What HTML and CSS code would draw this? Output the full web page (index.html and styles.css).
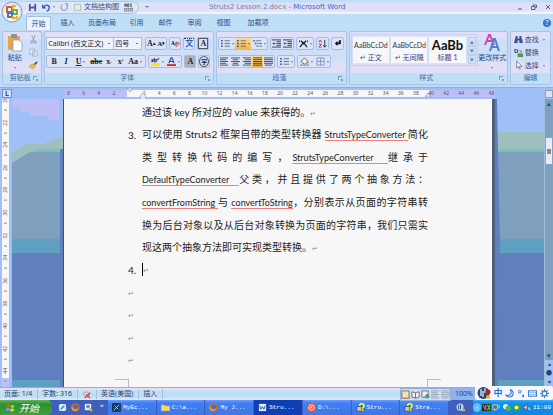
FILE: index.html
```html
<!DOCTYPE html>
<html lang="zh-cn">
<head>
    <meta charset="UTF-8">
    <title>Struts2 Lesson 2.docx - Microsoft Word</title>
    <link rel="stylesheet" href="styles.css">
</head>
<body>
    <!-- 公用图标 -->
    <svg class="defs" aria-hidden="true">
        <symbol id="i-lines" viewBox="0 0 10 10"><path d="M0 1h9M0 3h7M0 5h9M0 7h7M0 9h9" stroke="#445" fill="none"/></symbol>
        <symbol id="i-center" viewBox="0 0 10 10"><path d="M0 1h10M2 3h6M0 5h10M2 7h6M1 9h8" stroke="#445" fill="none"/></symbol>
        <symbol id="i-right" viewBox="0 0 10 10"><path d="M1 1h9M3 3h7M1 5h9M3 7h7M1 9h9" stroke="#445" fill="none"/></symbol>
        <symbol id="i-full" viewBox="0 0 10 10"><path d="M0 1h10M0 3h10M0 5h10M0 7h10M0 9h10" stroke="#543a10" fill="none"/></symbol>
        <symbol id="i-spread" viewBox="0 0 10 10"><path d="M0 1h10M0 3h10M0 5h10M0 7h10M1 9h8" stroke="#445" fill="none"/></symbol>
        <symbol id="i-list" viewBox="0 0 10 10"><path d="M0 2h2M0 5h2M0 8h2" stroke="#3b62b5" stroke-width="1.6"/><path d="M4 2h6M4 5h6M4 8h6" stroke="#667" fill="none"/></symbol>
        <symbol id="i-indent" viewBox="0 0 10 10"><path d="M0 1h10M5 3h5M5 5h5M5 7h5M0 9h10" stroke="#334" fill="none"/><path d="M4 5H1M2.5 3.5L1 5l1.500 1.500" stroke="#2956b8" fill="none"/></symbol>
        <symbol id="i-ff" viewBox="0 0 10 10"><circle cx="5" cy="5" r="4.500" fill="#e36a12"/><circle cx="5.300" cy="4.300" r="2.600" fill="#3a6fc8"/><path d="M1 2c0 5 3 6 7 4-1 3-6 4-7.500 0z" fill="#f8a01c"/></symbol>
        <symbol id="i-help" viewBox="0 0 10 10"><rect x="1" y="4" width="5" height="5" fill="#c8c8b0" stroke="#333" stroke-width=".6"/><path d="M4 3c0-3 5-3 5 0 0 2-2 1.500-2 3.500" fill="none" stroke="#ff0" stroke-width="1.800"/><path d="M6.200 8h1.800" stroke="#ff0" stroke-width="1.600"/></symbol>
    </svg>

    <div class="window">
        <header class="titlebar">
            <button class="office" aria-label="Office 按钮">
                <svg viewBox="0 0 22 22">
                    <circle cx="11" cy="11" r="10" fill="#e2e4ee" stroke="#8b9cc0"/>
                    <circle cx="11" cy="12" r="8" fill="#f5f4f6"/>
                    <g fill="none" stroke-width="2">
                        <rect x="6" y="6" width="5" height="5" stroke="#e0561b"/>
                        <rect x="12" y="9" width="4" height="4" stroke="#78b030"/>
                        <rect x="7" y="12" width="4" height="4" stroke="#3e78c8"/>
                        <path d="M12 15v2h4v-2M12 8V5h3" stroke="#efb01e"/>
                    </g>
                </svg>
            </button>
            <div class="quick">
                <button aria-label="保存"><svg class="ic" viewBox="0 0 10 10"><path d="M1 1h8v8H1z" fill="#4a55a8"/><path d="M3 1h4v3H3zM3 6h4v3H3z" fill="#e8ecff"/></svg></button>
                <button class="drop" aria-label="撤消"><svg class="ic" viewBox="0 0 10 10"><path d="M2 4c3-3 7-1 6 2-.5 2-2 3-3 3" fill="none" stroke="#3465c8" stroke-width="1.600"/><path d="M0 1v5h5z" fill="#3465c8"/></svg></button>
                <button aria-label="恢复"><svg class="ic" viewBox="0 0 10 10"><path d="M7 2a3.500 3.500 0 1 1-4.500 0" fill="none" stroke="#9aabc8" stroke-width="1.600"/><path d="M5 0h4v4z" fill="#9aabc8"/></svg></button>
                <label class="docmap"><input type="checkbox">文档结构图</label>
                <button aria-label="拼写"><svg class="ic" viewBox="0 0 10 10"><path d="M1 4V1h1.500v3M1 3h1.500M4 1h1.500v3H4zM9 1H7.500v3H9" fill="none" stroke="#333" stroke-width=".8"/><path d="M0 5.500h10v4H0z" fill="#8890a0"/><path d="M1 7h8M1 8.500h8" stroke="#eee" stroke-dasharray="1.500 .8" stroke-width=".7"/></svg></button>
            </div>
            <button class="more" aria-label="自定义快速访问工具栏"></button>
            <h1 class="caption"><span>Struts2 Lesson 2.docx</span> - Microsoft Word</h1>
            <div class="winbtns">
                <button aria-label="最小化"><svg viewBox="0 0 6 6"><path d="M1 5h4" stroke="#567" /></svg></button>
                <button aria-label="还原"><svg viewBox="0 0 6 6"><path d="M2 2V1h3.500v2.500H4M.5 2.500H4v3H.5z" stroke="#567" fill="none"/></svg></button>
                <button aria-label="关闭"><svg viewBox="0 0 6 6"><path d="M1 1l4 4M5 1L1 5" stroke="#567"/></svg></button>
            </div>
        </header>

        <nav class="tabs">
            <button class="on">开始</button>
            <button>插入</button>
            <button class="wide">页面布局</button>
            <button>引用</button>
            <button>邮件</button>
            <button>审阅</button>
            <button>视图</button>
            <button class="wide">加载项</button>
            <button class="help" aria-label="帮助">?</button>
        </nav>

        <div class="ribbon">
            <section class="group clip">
                <div class="body">
                    <button class="big drop-b">
                        <svg viewBox="0 0 16 18"><rect x="1" y="2" width="12" height="14" rx="1" fill="#e8a44c"/><rect x="4" y="0" width="6" height="4" rx="1" fill="#8a8f9c"/><path d="M6 6h6l3 3v8H6z" fill="#fff" stroke="#8b9cbb" stroke-width=".8"/></svg>
                        粘贴
                    </button>
                    <div class="stack">
                        <button aria-label="剪切"><svg class="ic" viewBox="0 0 10 10"><path d="M3 0l3 7M7 0L4 7" stroke="#8a9ab8"/><circle cx="3" cy="8" r="1.300" fill="none" stroke="#8a9ab8"/><circle cx="7" cy="8" r="1.300" fill="none" stroke="#8a9ab8"/></svg></button>
                        <button aria-label="复制"><svg class="ic" viewBox="0 0 10 10"><path d="M1 1h5v6H1zM4 3h5v6H4z" fill="#e6ebf6" stroke="#9aaac6" stroke-width=".8"/></svg></button>
                        <button aria-label="格式刷"><svg class="ic" viewBox="0 0 10 10"><path d="M9 1L6 4" stroke="#555" stroke-width="2"/><path d="M4 3l3 3-3 3-4-3z" fill="#f0c030" stroke="#9a7a20" stroke-width=".5"/></svg></button>
                    </div>
                </div>
                <h2 class="launcher">剪贴板</h2>
            </section>

            <section class="group font">
                <div class="body rows">
                    <div class="row">
                        <div class="combos">
                            <select class="face" aria-label="字体"><option>Calibri (西文正文)</option></select>
                            <select class="size" aria-label="字号"><option>四号</option></select>
                        </div>
                        <div class="set"><button>A<sup>▴</sup></button><button class="sm">A<sup>▾</sup></button></div>
                        <div class="set"><button aria-label="清除格式"><svg class="ic" viewBox="0 0 10 10"><text x="0" y="7" class="tiny">Aa</text><path d="M4 7l4-4 2 2-4 4z" fill="#e08a9a" stroke="#855" stroke-width=".4"/></svg></button></div>
                        <div class="set"><button class="pinyin">文</button></div>
                        <div class="set"><button class="boxed">A</button></div>
                    </div>
                    <div class="row">
                        <div class="set seven">
                            <button><b>B</b></button><button><i>I</i></button><button class="drop"><u>U</u></button><button><s>abc</s></button><button>x<sub>,</sub></button><button>x<sup>²</sup></button><button class="drop">Aa</button>
                        </div>
                        <div class="set">
                            <button class="drop" aria-label="突出显示"><svg class="ic" viewBox="0 0 10 10"><text x="0" y="5" class="tiny">ab</text><path d="M4 6l5-5" stroke="#667" stroke-width="1.500"/><path d="M0 7h9v3H0z" fill="#ffe600"/></svg></button>
                            <button class="drop" aria-label="字体颜色"><svg class="ic" viewBox="0 0 10 10"><path d="M2 7l2.500-6h1L8 7M3 5h4" fill="none" stroke="#2a4a90" stroke-width="1.200"/><path d="M0 8h10v2H0z" fill="#e02020"/></svg></button>
                        </div>
                        <div class="set"><button class="shade">A</button></div>
                        <div class="set"><button class="circle">字</button></div>
                    </div>
                </div>
                <h2 class="launcher">字体</h2>
            </section>

            <section class="group para">
                <div class="body rows">
                    <div class="row">
                        <div class="set">
                            <button class="drop" aria-label="项目符号"><svg class="ic"><use href="#i-list"/></svg></button>
                            <button class="drop lit" aria-label="编号"><svg class="ic"><use href="#i-list"/></svg></button>
                            <button class="drop" aria-label="多级列表"><svg class="ic" viewBox="0 0 10 10"><path d="M0 2h2M2 5h2M4 8h2" stroke="#3b62b5" stroke-width="1.400"/><path d="M3 2h6M5 5h5M7 8h3" stroke="#667"/></svg></button>
                        </div>
                        <div class="set"><button aria-label="减少缩进"><svg class="ic"><use href="#i-indent"/></svg></button><button aria-label="增加缩进"><svg class="ic"><use href="#i-indent"/></svg></button></div>
                        <div class="set"><button class="drop" aria-label="中文版式"><svg class="ic" viewBox="0 0 10 10"><path d="M1 9l4-5 4 5M2 2l3 3 3-3M0 1v3M10 1v3" fill="none" stroke="#222" stroke-width="1.400"/></svg></button></div>
                        <div class="set"><button aria-label="排序"><svg class="ic" viewBox="0 0 10 10"><path d="M1 4l1.500-3L4 4M1 6h3L1 9h3" fill="none" stroke="#a03c50"/><path d="M7.500 1v8M5.500 7l2 2 2-2" fill="none" stroke="#223"/></svg></button></div>
                        <div class="set"><button aria-label="显示标记"><svg class="ic" viewBox="0 0 10 10"><path d="M8 1v4H3M5 3L3 5l2 2M7 2v3" fill="none" stroke="#112" stroke-width="1.400"/></svg></button></div>
                    </div>
                    <div class="row">
                        <div class="set">
                            <button aria-label="左对齐"><svg class="ic"><use href="#i-lines"/></svg></button>
                            <button aria-label="居中"><svg class="ic"><use href="#i-center"/></svg></button>
                            <button aria-label="右对齐"><svg class="ic"><use href="#i-right"/></svg></button>
                            <button class="lit" aria-label="两端对齐"><svg class="ic"><use href="#i-full"/></svg></button>
                            <button aria-label="分散对齐"><svg class="ic"><use href="#i-spread"/></svg></button>
                        </div>
                        <div class="set"><button class="drop" aria-label="行距"><svg class="ic"><use href="#i-list"/></svg></button></div>
                        <div class="set">
                            <button class="drop" aria-label="底纹"><svg class="ic" viewBox="0 0 10 10"><path d="M1 5l4-4 4 4-4 3z" fill="#f2f4fa" stroke="#556"/><path d="M9 5v3" stroke="#e0a030" stroke-width="1.500"/><path d="M0 9h10" stroke="#99a" stroke-width="1.500"/></svg></button>
                            <button class="drop" aria-label="边框"><svg class="ic" viewBox="0 0 10 10"><path d="M1 1h8v8H1zM5 1v8M1 5h8" fill="none" stroke="#8497bd"/></svg></button>
                        </div>
                    </div>
                </div>
                <h2 class="launcher">段落</h2>
            </section>

            <section class="group styles">
                <div class="body">
                    <div class="gallery">
                        <button class="card"><span>AaBbCcDd</span><em>↵ 正文</em></button>
                        <button class="card"><span>AaBbCcDd</span><em>↵ 无间隔</em></button>
                        <button class="card head"><span>AaBb</span><em>标题 1</em></button>
                        <div class="scroll"><button aria-label="上">▴</button><button aria-label="下">▾</button><button aria-label="其他">▾</button></div>
                    </div>
                    <button class="big drop-b">
                        <svg viewBox="0 0 16 18"><path d="M1 11L5 1h1l4 10M3 7h5" fill="none" stroke="#c84aa8" stroke-width="2"/><path d="M6 17l4-12h1l4 12M8 13h6" fill="none" stroke="#4a7fd0" stroke-width="2"/></svg>
                        更改样式
                    </button>
                </div>
                <h2 class="launcher">样式</h2>
            </section>

            <section class="group edit">
                <div class="body stack">
                    <button class="drop"><svg class="ic" viewBox="0 0 10 10"><path d="M2 1h2v3h2V1h2l2 8H6V6H4v3H0z" fill="#3b5590"/></svg>查找</button>
                    <button><svg class="ic" viewBox="0 0 10 10"><path d="M1 1v4h3V2H1M6 3c3 0 2 2 2 2" fill="none" stroke="#446"/><path d="M4 6h6v4H4z" fill="#4a9a4a"/></svg>替换</button>
                    <button class="drop"><svg class="ic" viewBox="0 0 10 10"><path d="M3 0v8l2-2 1 3 1-.5L6 6h3z" fill="#fff" stroke="#567" stroke-width=".8"/></svg>选择</button>
                </div>
                <h2>编辑</h2>
            </section>
        </div>

        <div class="hruler">
            <button class="tabstop" aria-label="制表符">L</button>
            <div class="scale">
                <svg class="mark first" viewBox="0 0 6 4"><path d="M0 0h6L3 4z" fill="#dfe8fa" stroke="#7890c0" stroke-width=".7"/></svg>
                <svg class="mark left" viewBox="0 0 6 8"><path d="M3 0l3 3v5H0V3z" fill="#dfe8fa" stroke="#7890c0" stroke-width=".7"/></svg>
                <svg class="mark right" viewBox="0 0 6 4"><path d="M0 4h6L3 0z" fill="#dfe8fa" stroke="#7890c0" stroke-width=".7"/></svg>
            </div>
            <button class="rulerbtn" aria-label="标尺"></button>
        </div>

        <main class="work">
            <div class="vruler"></div>
            <svg class="desk left" viewBox="0 0 52 288" preserveAspectRatio="none">
                <path d="M0 0h52v60H0z" fill="#9fbff7"/>
                <path d="M0 0h48v21H37v-4H18v-4H8V9H0z" fill="#bfbff7"/>
                <path d="M0 53l16-8h16L52 37v26H0z" fill="#9fbfbf"/>
                <path d="M0 64l18-11h34v100H0z" fill="#7f9fbf"/>
                <path d="M24 50h28v3H20z" fill="#7fbfbf"/>
                <path d="M0 140h52v14H0z" fill="#5f9fbf"/>
                <path d="M0 154h52v127H0z" fill="#5f7fbf"/>
                <path d="M0 281h52v7H0z" fill="#5f9fbf"/>
                <path d="M49 50h3v238h-3z" fill="#5f7fbf"/>
            </svg>
            <article class="page">
                <p class="ragged"><span>通过该 key 所对应的 value 来获得的。<i>↵</i></span></p>
                <p><b>3.</b><span>可以使用 Struts2 框架自带的类型转换器 <u>StrutsTypeConverter </u>简化</span></p>
                <p><span>类型转换代码的编写，<u>StrutsTypeConverter &nbsp;</u>继承于</span></p>
                <p><span><u>DefaultTypeConverter &nbsp;</u>父类，并且提供了两个抽象方法：</span></p>
                <p><span><u>convertFromString </u>与 <u>convertToString</u>，分别表示从页面的字符串转</span></p>
                <p><span>换为后台对象以及从后台对象转换为页面的字符串，我们只需实</span></p>
                <p class="ragged"><span>现这两个抽象方法即可实现类型转换。<i>↵</i></span></p>
                <p class="ragged"><b>4.</b><span class="caret"><i>↵</i></span></p>
                <p><b><i>↵</i></b></p>
                <p><b><i>↵</i></b></p>
                <p><b><i>↵</i></b></p>
                <p><b><i>↵</i></b></p>
                <div class="corners"></div>
            </article>
            <svg class="desk right" viewBox="0 0 50 288" preserveAspectRatio="none">
                <path d="M0 0h50v33H0z" fill="#9fbff7"/>
                <path d="M0 33h50v17H0z" fill="#9fbfbf"/>
                <path d="M0 50h50v3H0z" fill="#7fbfbf"/>
                <path d="M0 53h50v87H0z" fill="#7f9fbf"/>
                <path d="M0 140h50v14H0z" fill="#5f9fbf"/>
                <path d="M0 154h50v127H0z" fill="#5f7fbf"/>
                <path d="M0 281h50v7H0z" fill="#5f9fbf"/>
                <path d="M0 0h2l3 140-2 148H0z" fill="#5f7fbf"/>
            </svg>
            <div class="vscroll">
                <button aria-label="向上">▴</button>
                <div class="track"><div class="thumb"></div></div>
                <button aria-label="向下">▾</button>
                <div class="browse"><button aria-label="前一页">▴</button><button aria-label="选择浏览对象">●</button><button aria-label="下一页">▾</button></div>
            </div>
        </main>

        <footer class="status">
            <span>页面: 1/4</span>
            <span>字数: 316</span>
            <span><svg class="ic" viewBox="0 0 10 10"><path d="M1 4l4-2 4 3-4 3z" fill="#fff" stroke="#668" stroke-width=".7"/><path d="M4 4l5 5M9 3L3 9" stroke="#d8342c" stroke-width="1.300"/></svg></span>
            <span>英语(美国)</span>
            <span>插入</span>
            <div class="views">
                <button class="lit" aria-label="页面视图"><svg class="ic" viewBox="0 0 10 10"><path d="M1 1h8v8H1z" fill="#eee4cc" stroke="#766"/></svg></button>
                <button aria-label="阅读版式"><svg class="ic" viewBox="0 0 10 10"><path d="M1 2l4 1 4-1v6L5 9 1 8zM5 3v6" fill="#f4f4f4" stroke="#667"/></svg></button>
                <button aria-label="Web 版式"><svg class="ic" viewBox="0 0 10 10"><path d="M1 1h7v7H1z" fill="#eee" stroke="#667"/><circle cx="7" cy="7" r="2.500" fill="#4a9a80"/></svg></button>
                <button aria-label="大纲"><svg class="ic"><use href="#i-lines" opacity=".4"/></svg></button>
                <button aria-label="草稿"><svg class="ic"><use href="#i-spread" opacity=".4"/></svg></button>
            </div>
            <button class="zoom">100%</button>
            <div class="ime">
                <svg class="ball" viewBox="0 0 14 14"><circle cx="6.500" cy="7" r="6" fill="#28456c"/><path d="M4 3v7M8 2v5M6 5v6" stroke="#dce8f4" stroke-width="1.300"/><circle cx="11" cy="6" r="2.500" fill="#a82424"/><circle cx="11" cy="11" r="2" fill="#eeb020"/></svg>
                <button>中</button>
                <button aria-label="半角"><svg class="ic" viewBox="0 0 10 10"><path d="M6 1c2 4 0 7-5 6 3 4 9 1 8-3 0-2-2-3-3-3z" fill="none" stroke="#2870d8" stroke-width="1.200"/></svg></button>
                <button aria-label="标点"><svg class="ic" viewBox="0 0 10 10"><circle cx="3" cy="3" r="1.500" fill="none" stroke="#2870d8"/><path d="M7 6v2L6 9" stroke="#2870d8" stroke-width="1.600" fill="none"/></svg></button>
                <button aria-label="软键盘"><svg class="ic" viewBox="0 0 10 10"><rect y="2" x=".5" width="9" height="6" fill="none" stroke="#2870d8"/><path d="M2 4h7M2 6h7" stroke="#2870d8" stroke-dasharray="1 1"/></svg></button>
                <button aria-label="设置"><svg class="ic" viewBox="0 0 10 10"><circle cx="5" cy="5" r="2.700" fill="none" stroke="#2870d8" stroke-width="1.300"/><path d="M5 0v2M5 8v2M0 5h2M8 5h2M1.500 1.500l1.200 1.200M7.300 7.300l1.200 1.200M8.500 1.500L7.300 2.700M2.700 7.300L1.500 8.500" stroke="#2870d8" stroke-width="1.300"/></svg></button>
            </div>
        </footer>

        <div class="taskbar">
            <button class="start"><svg class="ic" viewBox="0 0 10 10"><path d="M1 1.500q2-1 3.500 0L4 5Q2 4 .5 5z" fill="#f25022"/><path d="M5.500 2q2 1 4 0L9 5q-2 1-4 0z" fill="#8bd03c"/><path d="M.5 6q1.500-1 3.500 0l-.5 3Q2 8 0 9z" fill="#4ab0ff"/><path d="M5 6q2 1 4 0l-.5 3q-2 1-4 0z" fill="#ffd21c"/></svg>开始</button>
            <div class="launch">
                <a href="#" aria-label="桌面"><svg class="ic" viewBox="0 0 10 10"><rect x="1" y="1" width="8" height="8" rx="2" fill="#d8ecf8"/><path d="M3 7l4-4" stroke="#2a88c0" stroke-width="1.500"/></svg></a>
                <a href="#" aria-label="Firefox"><svg class="ic"><use href="#i-ff"/></svg></a>
                <a href="#" aria-label="搜索"><svg class="ic" viewBox="0 0 10 10"><rect x="1" y="1" width="7" height="7" fill="#e8f0f8"/><circle cx="4.500" cy="4" r="2" fill="#4a90d0"/><path d="M6 6l3 3" stroke="#e8b840" stroke-width="2"/></svg></a>
                <span>»</span>
            </div>
            <div class="tasks">
                <button><svg class="ic" viewBox="0 0 10 10"><rect width="10" height="10" rx="1" fill="#163a66"/><path d="M2 8l6-6M3 3l4 4" stroke="#9fd0e8"/></svg>MyEc...</button>
                <button><svg class="ic" viewBox="0 0 10 10"><path d="M0 2h4l1 1h5v6H0z" fill="#f4d470" stroke="#b08a28" stroke-width=".6"/></svg>C:\a...</button>
                <button><svg class="ic"><use href="#i-ff"/></svg>My J...</button>
                <button class="on"><svg class="ic" viewBox="0 0 10 10"><path d="M1 1h8v8H1z" fill="#e8eefa"/><path d="M2 3l1.200 4L5 4l1.600 3L8 3" stroke="#2b579a" fill="none"/></svg>Stru...</button>
                <button><svg class="ic" viewBox="0 0 10 10"><rect width="10" height="10" rx="1" fill="#e2573a"/><circle cx="5" cy="5" r="3" fill="none" stroke="#fff"/><circle cx="5" cy="5" r="1" fill="#fff"/></svg>D:\...</button>
                <button><svg class="ic"><use href="#i-help"/></svg>Stru...</button>
                <button><svg class="ic"><use href="#i-help"/></svg>Stra...</button>
            </div>
            <div class="lang"><svg class="ic" viewBox="0 0 10 10"><circle cx="4.500" cy="4.500" r="4" fill="#b8d4ec"/><path d="M3 2v5M5 2v5" stroke="#24508c"/><path d="M6 8h4" stroke="#eec040" stroke-width="2"/></svg></div>
            <div class="tray">
                <button class="fold" aria-label="隐藏图标">‹</button>
                <svg class="ic" viewBox="0 0 10 10"><path d="M0 1h10v8H0z" fill="#183018"/><path d="M1 2l3 6M4 2v6" stroke="#f03cc0" stroke-width="1.500"/><path d="M6 2l3 6M9 2L6 8" stroke="#30e040" stroke-width="1.500"/></svg>
                <svg class="ic" viewBox="0 0 10 10"><path d="M1 2h5v5H1zM3 7v2" fill="#667" stroke="#ccd"/><path d="M8 2v4" stroke="#dde"/></svg>
                <svg class="ic" viewBox="0 0 10 10"><circle cx="4" cy="4" r="3" fill="#e8f0e8"/><circle cx="7" cy="6" r="3" fill="#50b060"/></svg>
                <svg class="ic" viewBox="0 0 10 10"><circle cx="5" cy="5" r="4.500" fill="#38a838"/><circle cx="5" cy="5" r="2" fill="#fff"/></svg>
                <svg class="ic" viewBox="0 0 10 10"><path d="M1 4h2l3-3v7L3 6H1z" fill="#c8ccd4" stroke="#556"/><path d="M7 5l2 3" stroke="#f0d0a0" stroke-width="1.500"/></svg>
                <time>11:00</time>
            </div>
        </div>
    </div>

    <script>
        let scale = document.querySelector(".scale");
        let vruler = document.querySelector(".vruler");

        // 水平标尺: 8 6 4 2 (0) 2 4 ... 48
        for (let i = -8; i <= 48; i += 2) {
            let s = document.createElement("span");
            s.textContent = i === 0 ? "" : Math.abs(i);
            scale.appendChild(s);
        }
        // 垂直标尺
        for (let i = 20; i <= 44; i += 2) {
            let s = document.createElement("span");
            s.textContent = i;
            vruler.appendChild(s);
        }
    </script>
</body>
</html>
```
FILE: styles.css
```css
* {
    box-sizing: border-box;
}
body {
    margin: 0;
    font-family: "Noto Sans", "Noto Sans CJK SC", sans-serif;
    font-size: 7px;
    line-height: 10px;
    color: #2f4a86;
}
button, select, input {
    margin: 0;
    padding: 0;
    border: 0;
    background: none;
    font: inherit;
    color: inherit;
}
h1, h2, p {
    margin: 0;
    font-size: inherit;
    font-weight: normal;
}
.defs {
    position: absolute;
    width: 0;
    height: 0;
}
.ic {
    display: block;
    flex: none;
    width: 9px;
    height: 9px;
}
.tiny {
    font: bold 6px "Liberation Serif", serif;
}
.window {
    display: flex;
    flex-direction: column;
    height: 100vh;
    overflow: hidden;
}

/* 下拉小三角 */
.drop::after, .drop-b::after, .more::after {
    content: "";
    flex: none;
    margin-left: 2px;
    border: 1px solid transparent;
    border-top: 2px solid #5f7fbf;
    border-bottom: 0;
}
.drop-b::after {
    margin: 4px 0 0;
}
.lit {
    background: linear-gradient(#fbdc98, #f5b545);
}

/* 标题栏 */
.titlebar {
    position: relative;
    display: flex;
    align-items: center;
    flex: none;
    height: 14px;
    padding-left: 26px;
    background: linear-gradient(#bfdff7 2px, #dfdff7 3px 11px, #eef3fc 12px);
}
.office {
    position: absolute;
    z-index: 2;
    left: 1px;
    top: 1px;
    width: 22px;
    height: 22px;
}
.office svg {
    display: block;
}
.quick {
    display: flex;
    align-items: center;
    gap: 5px;
    height: 13px;
    padding: 0 5px 0 2px;
    border: 1px solid #b0c6ea;
    border-left: 0;
    border-radius: 0 7px 7px 0;
    background: #dfe6f8;
}
.quick button {
    display: flex;
    align-items: center;
}
.docmap {
    display: flex;
    align-items: center;
    gap: 3px;
}
.docmap input {
    appearance: none;
    width: 7px;
    height: 7px;
    border: 1px solid #b9c3bd;
    background: #e8ebe8;
}
.more {
    padding: 0 4px;
}
.more::after {
    display: block;
    border-width: 2px;
}
.caption {
    flex: 1;
    padding-left: 56px;
    color: #4767b4;
    font-family: "DejaVu Sans", sans-serif;
    white-space: nowrap;
}
.caption span {
    color: #74809c;
}
.winbtns {
    display: flex;
    gap: 8px;
    padding-right: 2px;
}
.winbtns svg {
    display: block;
    width: 6px;
    height: 6px;
}

/* 选项卡 */
.tabs {
    display: flex;
    flex: none;
    gap: 4px;
    height: 16px;
    padding: 2px 2px 0 26px;
    background: #bfdff7;
}
.tabs button {
    width: 25px;
}
.tabs .wide {
    width: 36px;
}
.tabs .on {
    background: #eef2fb;
    border: 1px solid #9fbfe7;
    border-bottom: 0;
    border-radius: 2px 2px 0 0;
}
.tabs .help {
    align-self: center;
    width: 8px;
    height: 8px;
    margin-left: auto;
    border-radius: 50%;
    background: #3f6fd0;
    color: #fff;
    line-height: 8px;
}

/* 功能区 */
.ribbon {
    display: flex;
    flex: none;
    gap: 2px;
    height: 58px;
    padding: 1px 2px 2px;
    background: #c3d9f5;
    border-bottom: 1px solid #8fafdf;
}
.group {
    display: flex;
    flex-direction: column;
    min-width: 0;
    border: 1px solid #a7c3e7;
    border-radius: 2px;
    background: linear-gradient(#dfdff7 7px, #cfdff7 8px 28px, #dfdff7 30px);
}
.clip { flex: 39 0 0; }
.font { flex: 171 0 0; }
.para { flex: 131 0 0; }
.styles { flex: 160 0 0; }
.edit { flex: 40 0 0; }
.group h2 {
    height: 11px;
    background: #bfdff7;
    text-align: center;
    color: #4767a4;
}
.group .launcher {
    background:
        linear-gradient(#7f97c7, #7f97c7) right 4px top 3px / 4px 1px no-repeat,
        linear-gradient(#7f97c7, #7f97c7) right 7px top 3px / 1px 4px no-repeat,
        linear-gradient(#7f97c7, #7f97c7) right 3px top 6px / 2px 2px no-repeat,
        #bfdff7;
    padding-right: 4px;
}
.body {
    display: flex;
    flex: 1;
    min-height: 0;
}
.rows {
    flex-direction: column;
    gap: 5px;
    padding: 5px 1px 0;
}
.row {
    display: flex;
    gap: 2px;
}
.set {
    display: flex;
    flex: none;
    height: 13px;
    border: 1px solid #a3bde3;
    border-radius: 2px;
    background: #d9e4f8;
}
.set button {
    display: flex;
    align-items: center;
    justify-content: center;
    min-width: 10px;
    color: #223;
    font-family: "Liberation Serif", "Noto Sans CJK SC", serif;
    font-weight: bold;
    font-size: 8px;
}
.para .set button {
    min-width: 11px;
}
.set .drop, .para .set .drop {
    min-width: 16px;
}
.set sup, .set sub {
    font-size: 5px;
    line-height: 5px;
}
.font .set .sm {
    font-size: 7px;
}
.set.seven {
    width: 100px;
    justify-content: space-between;
    padding: 0 2px;
}
.set .pinyin {
    border-top: 1px dotted #334;
    color: #2f5fc0;
}
.boxed {
    outline: 1px solid #556;
    outline-offset: -1px;
}
.set .shade {
    background: #aab0bc;
}
.set .circle {
    border: 1px solid #556;
    border-radius: 50%;
    font-size: 6px;
}
.combos {
    display: flex;
    flex: none;
    width: 96px;
    height: 13px;
    margin-right: 1px;
    border: 1px solid #a3bde3;
    background: #eef2fb;
    color: #223;
}
.combos select {
    appearance: none;
    padding-left: 1px;
    background: linear-gradient(#5f7fbf, #5f7fbf) right 3px center / 2px 1px no-repeat;
}
.face {
    flex: 1;
}
.combos .size {
    width: 28px;
    border-left: 1px solid #a3bde3;
}
.big {
    display: flex;
    flex-direction: column;
    align-items: center;
    flex: 1;
    padding-top: 2px;
    white-space: nowrap;
}
.big svg {
    width: 16px;
    height: 18px;
    margin-bottom: 1px;
}
.stack {
    display: flex;
    flex-direction: column;
    justify-content: space-around;
    padding: 1px 3px;
}
.stack button {
    display: flex;
    align-items: center;
    gap: 2px;
    white-space: nowrap;
}
.gallery {
    display: flex;
    gap: 2px;
    flex: none;
    width: 127px;
    height: 32px;
    margin: 2px 0 0 1px;
    padding: 2px 1px;
    border: 1px solid #c3d3ef;
    color: #334;
}
.card {
    display: flex;
    flex-direction: column;
    align-items: center;
    justify-content: space-between;
    flex: 1;
    padding: 1px 0;
    background: #f7f7f9;
    font-family: "Lato", "Noto Sans CJK SC", sans-serif;
}
.card span {
    line-height: 14px;
}
.card em {
    font-style: normal;
    color: #3a3f8c;
}
.head span {
    font-size: 13px;
    font-weight: bold;
    color: #111;
}
.scroll {
    display: flex;
    flex-direction: column;
    justify-content: space-between;
    width: 8px;
    color: #5f7fbf;
}
.scroll button {
    height: 9px;
    line-height: 7px;
    border: 1px solid #bfcfe7;
}

/* 水平标尺 */
.hruler {
    display: flex;
    align-items: center;
    flex: none;
    height: 11px;
    background: #9fbff7;
}
.tabstop {
    width: 10px;
    height: 9px;
    margin: 0 49px 0 2px;
    border: 1px solid #6f8fd0;
    background: #cfdff7;
    font-weight: bold;
    line-height: 7px;
}
.scale {
    position: relative;
    display: grid;
    grid-template-columns: repeat(29, 1fr);
    flex: 1;
    height: 7px;
    margin-right: 46px;
    background: linear-gradient(90deg, transparent 1%, #bfbff7 1% 15%, #f7f7f7 15% 84%, #bfbff7 84% 99%, transparent 99%);
    font-size: 5px;
    line-height: 7px;
    text-align: center;
    color: #556;
}
.mark {
    position: absolute;
    width: 6px;
}
.mark.first {
    left: 15%;
    top: -2px;
}
.mark.left {
    left: 18%;
    top: 3px;
    height: 7px;
}
.mark.right {
    left: 83%;
    top: 3px;
}
.rulerbtn {
    width: 8px;
    height: 8px;
    border: 1px solid #8f9fbf;
    background: #dfe3ef;
}

/* 文档区 */
.work {
    display: flex;
    flex: 1;
    min-height: 0;
    background: #9fbff7;
}
.vruler {
    display: flex;
    flex-direction: column;
    align-items: center;
    justify-content: flex-end;
    flex: none;
    width: 7px;
    margin: 0 3px 0 2px;
    padding-bottom: 5px;
    overflow: hidden;
    background: linear-gradient(#f7f7f7, #f7f7f7) 0 0 / 100% 97% no-repeat #bfbff7;
    font-size: 5px;
    line-height: 7px;
    color: #556;
}
.vruler span {
    flex: 0 0 8%;
    writing-mode: vertical-lr;
    transform: rotate(180deg);
    text-align: center;
    background: linear-gradient(#889, #889) center top / 3px 1px no-repeat;
}
.desk {
    display: block;
    height: 100%;
    flex: none;
}
.desk.left {
    width: 51px;
}
.desk.right {
    width: 49px;
}
.page {
    position: relative;
    display: flex;
    flex-direction: column;
    flex: 1;
    min-width: 0;
    padding: 2px 64px 16px;
    border-left: 1px solid #3f4f7f;
    border-right: 3px solid #4f5f7f;
    background: #f7f7f7;
    color: #222;
    font-family: "Lato", "Noto Sans CJK SC", sans-serif;
    font-size: 10px;
    line-height: 12px;
}
.page p {
    display: grid;
    grid-template-columns: 14px 1fr;
    align-items: center;
    flex: 1;
    white-space: nowrap;
}
.page b {
    font-weight: normal;
}
.page span {
    grid-column: 2;
    text-align-last: justify;
}
.page .ragged span {
    text-align-last: left;
}
.page u {
    border-bottom: 1px solid #f08080;
    font-size: 9px;
    text-decoration: none;
}
.page i {
    color: #889;
    font-size: 7px;
    font-style: normal;
}
.page .caret {
    border-left: 1px solid #000;
}
.corners {
    position: absolute;
    right: 51px;
    bottom: 0;
    left: 51px;
    height: 8px;
    background:
        linear-gradient(#bbb, #bbb) left top / 13px 1px no-repeat,
        linear-gradient(#bbb, #bbb) 13px 0 / 1px 8px no-repeat,
        linear-gradient(#bbb, #bbb) right top / 13px 1px no-repeat,
        linear-gradient(#bbb, #bbb) right 13px top / 1px 8px no-repeat;
}
.vscroll {
    display: flex;
    flex-direction: column;
    flex: none;
    width: 9px;
    border-left: 1px solid #9fbfdf;
    background: #7f9fbf;
    color: #2f3f6f;
}
.vscroll button {
    height: 9px;
    line-height: 9px;
}
.track {
    flex: 1;
    padding-top: 29px;
}
.thumb {
    height: 28px;
    border: 1px solid #8f9fbf;
    border-radius: 1px;
    background: linear-gradient(#889, #889) center / 4px 5px no-repeat #e7ebf5;
}
.browse {
    display: flex;
    flex-direction: column;
    background: #9fbff7;
}
.browse button {
    font-size: 6px;
}

/* 状态栏 */
.status {
    position: relative;
    display: flex;
    align-items: center;
    flex: none;
    height: 13px;
    border-top: 1px solid #8fafdf;
    background: linear-gradient(#dfdff7 2px, #bfdff7 3px 9px, #dfe7f7 11px);
    color: #2f3f6f;
    white-space: nowrap;
}
.status span {
    padding: 0 5px 0 4px;
    border-right: 1px solid #9fbfdf;
}
.views {
    display: flex;
    gap: 1px;
    margin-left: auto;
    padding: 1px 0;
    border: 1px solid #8fafdf;
    background: #cfdff3;
}
.zoom {
    width: 102px;
    padding-left: 4px;
    align-self: stretch;
    background: #8fb3ef;
    text-align: left;
}
.ime {
    position: absolute;
    right: 0;
    bottom: 0;
    display: flex;
    align-items: center;
    justify-content: space-between;
    width: 78px;
    height: 14px;
    padding: 0 4px 0 2px;
    border-radius: 2px;
    background: #f7f7fb;
    color: #2870d8;
    font-size: 9px;
    font-weight: bold;
}
.ball {
    width: 14px;
    height: 14px;
}

/* 任务栏 */
.taskbar {
    display: flex;
    flex: none;
    height: 15px;
    background: #3f5fbf;
    color: #fff;
    font-family: "Liberation Mono", monospace;
    font-size: 6px;
}
.start {
    display: flex;
    align-items: center;
    gap: 4px;
    width: 52px;
    padding-left: 6px;
    border-radius: 0 5px 5px 0;
    background: linear-gradient(#5fb75f, #2f8f2f 4px, #3f9f3f);
    font-family: "Noto Sans CJK SC", sans-serif;
    font-size: 10px;
    font-style: italic;
}
.launch {
    display: flex;
    align-items: center;
    gap: 4px;
    width: 56px;
    padding-left: 6px;
}
.launch span {
    margin: 0 0 4px 3px;
}
.tasks {
    display: flex;
    flex: 1;
    gap: 1px;
}
.tasks button {
    display: flex;
    align-items: center;
    gap: 2px;
    flex: 1;
    padding-left: 4px;
    border-radius: 1px;
    background: linear-gradient(#6f9ff7, #3f7ff7 3px, #3f77e7);
}
.tasks .on {
    background: #0f3fb7;
}
.lang {
    display: flex;
    align-items: center;
    justify-content: center;
    width: 25px;
}
.tray {
    display: flex;
    align-items: center;
    gap: 1px;
    width: 80px;
    background: linear-gradient(#3fafff, #0f8fef 3px, #0f87e7);
}
.fold {
    width: 8px;
    height: 9px;
    border-radius: 50%;
    background: #5fbfff;
    line-height: 8px;
}
.tray time {
    margin-left: 1px;
}
```
